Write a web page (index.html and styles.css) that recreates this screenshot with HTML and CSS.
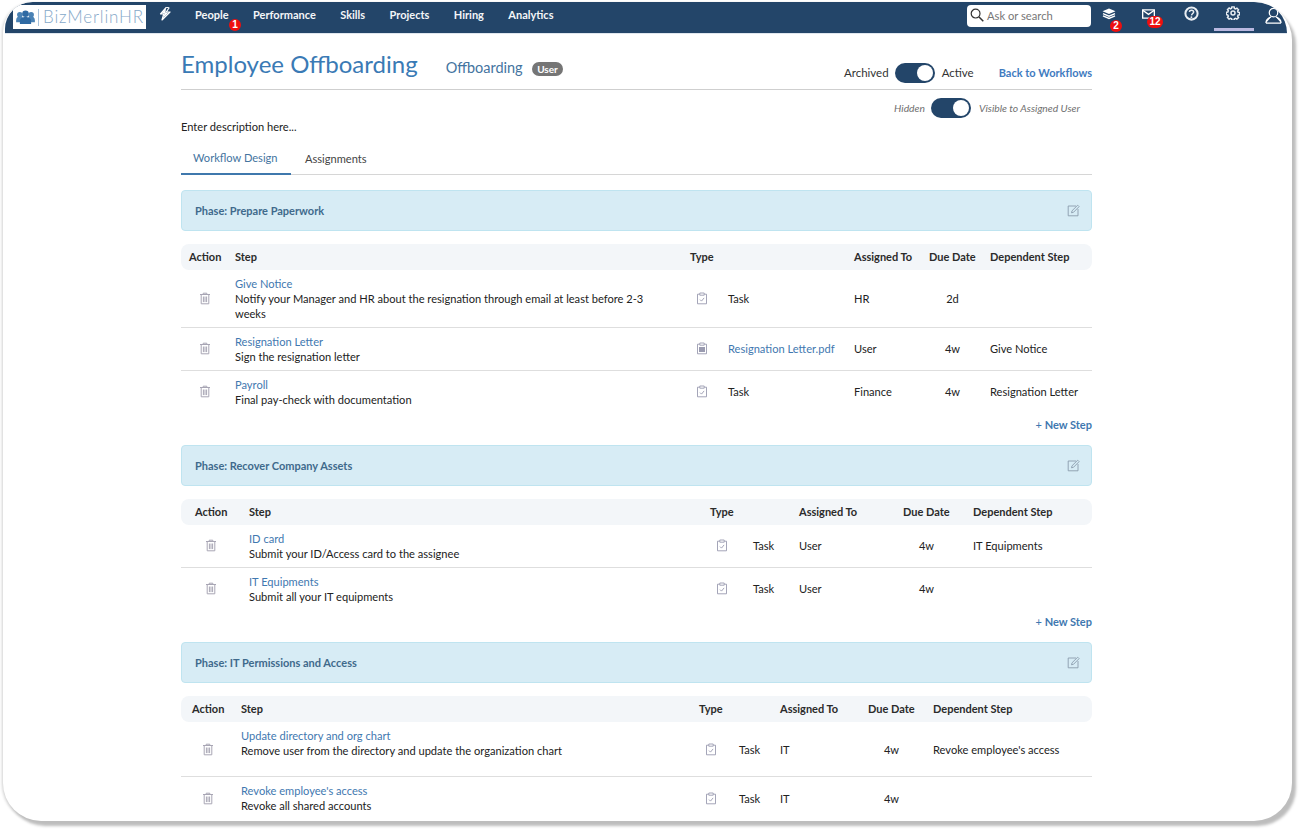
FILE: index.html
```html
<!DOCTYPE html>
<html lang="en">
<head>
<meta charset="utf-8">
<title>Employee Offboarding</title>
<link rel="stylesheet" href="styles.css">
</head>
<body>
<svg class="sprite" aria-hidden="true">
  <symbol id="i-trash" viewBox="0 0 12 13"><path d="M1 2.5h10M4.2 2.5V1.2h3.6v1.3M2.2 2.5v9.3h7.6V2.5M4.4 4.5v5.6M6 4.5v5.6M7.6 4.5v5.6" fill="none" stroke="currentColor" stroke-width="1"/></symbol>
  <symbol id="i-task" viewBox="0 0 12 13"><path d="M3.6 2.2H1.500v9.600h9V2.200H8.400M3.800 1h4.400v2.200H3.800zM4 7.600l1.500 1.500 2.600-3.200" fill="none" stroke="currentColor" stroke-width=".9"/></symbol>
  <symbol id="i-doc" viewBox="0 0 12 13"><path d="M3.600 2.200H1.500v9.600h9V2.200H8.400M3.800 1h4.400v2.200H3.800z" fill="none" stroke="currentColor" stroke-width=".9"/><path d="M3 5h6v5H3z" fill="currentColor"/></symbol>
  <symbol id="i-edit" viewBox="0 0 13 13"><path d="M9 2H1.200v9.800H11V5M5 6.800l-.5 2 2-.5 5.600-5.700-1.400-1.400z" fill="none" stroke="currentColor" stroke-width=".9"/></symbol>
</svg>

<div class="window">
  <nav class="topbar">
    <a class="logo">
      <svg class="logo-mark" viewBox="0 0 20 16"><circle cx="4" cy="5" r="3" fill="#4a82b5"/><circle cx="16" cy="5" r="3" fill="#4a82b5"/><circle cx="10" cy="4" r="3.500" fill="#2f6aa3"/><path d="M0 13V11c0-3 2-4 4-4s4 1 4 4v2zM12 13v-2c0-3 2-4 4-4s4 1 4 4v2z" fill="#4a82b5"/><path d="M4 15v-3c0-3.500 3-4.500 6-4.500s6 1 6 4.500v3z" fill="#2f6aa3"/></svg>
      <span class="logo-sep"></span>
      <span class="logo-text">BizMerlinHR</span>
    </a>
    <svg class="bolt" viewBox="0 0 12 14"><path d="M7.500 0 1.500 7h3.200L3 13l8-8H7.300L10 1z" fill="none" stroke="#fff" stroke-width="1.200" stroke-linejoin="round"/><path d="M7 1 2.500 6.500h3L4 11l5.500-5.500H6.500z" fill="#fff"/></svg>
    <ul class="menu">
      <li class="menu-item">People<span class="badge badge-people">1</span></li>
      <li class="menu-item">Performance</li>
      <li class="menu-item">Skills</li>
      <li class="menu-item">Projects</li>
      <li class="menu-item">Hiring</li>
      <li class="menu-item">Analytics</li>
    </ul>
    <div class="search">
      <svg class="search-icon" viewBox="0 0 14 14"><circle cx="5.600" cy="5.600" r="4.400" fill="none" stroke="#333" stroke-width="1.200"/><path d="m9 9 4.300 4.300" stroke="#333" stroke-width="1.500"/></svg>
      <span class="search-text">Ask or search</span>
    </div>
    <div class="tools">
      <div class="tool tool-layers">
        <svg viewBox="0 0 16 14"><path d="M8 .5 15 3.500 8 6.500 1 3.500z" fill="#fff"/><path d="M1.500 6 8 8.800 14.500 6M1.500 8.500 8 11.300l6.500-2.800" fill="none" stroke="#fff" stroke-width="1.500"/></svg>
        <span class="badge badge-layers">2</span>
      </div>
      <div class="tool tool-mail">
        <svg viewBox="0 0 16 12"><path d="M1 1h14v10H1z" fill="none" stroke="#fff" stroke-width="1.600"/><path d="m1 1.500 7 5 7-5" fill="none" stroke="#fff" stroke-width="1.600"/></svg>
        <span class="badge badge-mail">12</span>
      </div>
      <div class="tool tool-help">
        <svg viewBox="0 0 14 14"><circle cx="7" cy="7" r="5.700" fill="none" stroke="#e8edf2" stroke-width="1.900"/><path d="M5 5.400C5.300 3.400 9 3.500 9 5.500 9 7 7.200 7 7 8.800" fill="none" stroke="#e8edf2" stroke-width="1.400"/><circle cx="6.900" cy="10.400" r=".9" fill="#e8edf2"/></svg>
      </div>
      <div class="tool tool-gear">
        <svg viewBox="0 0 16 16"><circle cx="8" cy="8" r="2.300" fill="none" stroke="#e8edf2" stroke-width="1.700"/><path d="M6.700 1h2.600l.3 1.800 1.300.6 1.600-1 1.800 1.900-1 1.500.6 1.300 1.800.3v2.600l-1.800.3-.6 1.300 1 1.600-1.900 1.800-1.500-1-1.300.6-.3 1.800H6.700l-.3-1.800-1.300-.6-1.600 1-1.800-1.900 1-1.500-.6-1.300L.3 9.800V7.200l1.800-.3.6-1.300-1-1.600 1.900-1.800 1.500 1 1.300-.6z" fill="none" stroke="#e8edf2" stroke-width="1.700"/></svg>
      </div>
      <div class="tool tool-user">
        <svg viewBox="0 0 18 18"><circle cx="9" cy="6" r="4.500" fill="none" stroke="#fff" stroke-width="1.300"/><path d="M1 17c0-4 3-5.500 5.500-6.500M17 17c0-4-3-5.500-5.500-6.500M1 17h16" fill="#fff" stroke="#fff" stroke-width="1.300"/></svg>
      </div>
    </div>
  </nav>

  <main class="page">
    <header class="head">
      <h1 class="title">Employee Offboarding</h1>
      <span class="subtitle">Offboarding</span>
      <span class="pill">User</span>
      <div class="head-right">
        <span class="switch-label">Archived</span>
        <span class="toggle"><span class="knob"></span></span>
        <span class="switch-label">Active</span>
        <a class="back">Back to Workflows</a>
      </div>
    </header>
    <div class="visibility">
      <em class="vis-label">Hidden</em>
      <span class="toggle"><span class="knob"></span></span>
      <em class="vis-label">Visible to Assigned User</em>
    </div>
    <p class="desc">Enter description here...</p>
    <div class="tabs">
      <a class="tab tab-active">Workflow Design</a>
      <a class="tab">Assignments</a>
    </div>

    <section class="phase">
      <div class="phase-bar"><strong>Phase: Prepare Paperwork</strong><svg class="edit"><use href="#i-edit"/></svg></div>
      <div class="steps t1">
        <div class="row row-head">
          <span class="c-action">Action</span><span>Step</span><span class="c-type-head">Type</span><span>Assigned To</span><span>Due Date</span><span>Dependent Step</span>
        </div>
        <div class="row row-wrap">
          <span class="c-action"><svg class="trash"><use href="#i-trash"/></svg></span>
          <div class="c-step"><a class="link">Give Notice</a><br>Notify your Manager and HR about the resignation through email at least before 2-3 weeks</div>
          <span class="c-icon"><svg class="type-icon"><use href="#i-task"/></svg></span><span>Task</span><span>HR</span><span class="c-due">2d</span><span></span>
        </div>
        <div class="row">
          <span class="c-action"><svg class="trash"><use href="#i-trash"/></svg></span>
          <div class="c-step"><a class="link">Resignation Letter</a><br>Sign the resignation letter</div>
          <span class="c-icon"><svg class="type-icon"><use href="#i-doc"/></svg></span><a class="link file-link">Resignation Letter.pdf</a><span>User</span><span class="c-due">4w</span><span>Give Notice</span>
        </div>
        <div class="row row-last">
          <span class="c-action"><svg class="trash"><use href="#i-trash"/></svg></span>
          <div class="c-step"><a class="link">Payroll</a><br>Final pay-check with documentation</div>
          <span class="c-icon"><svg class="type-icon"><use href="#i-task"/></svg></span><span>Task</span><span>Finance</span><span class="c-due">4w</span><span>Resignation Letter</span>
        </div>
      </div>
      <div class="new-step"><span class="plus">+</span> New Step</div>
    </section>

    <section class="phase">
      <div class="phase-bar"><strong>Phase: Recover Company Assets</strong><svg class="edit"><use href="#i-edit"/></svg></div>
      <div class="steps t2">
        <div class="row row-head">
          <span class="c-action">Action</span><span>Step</span><span class="c-type-head">Type</span><span>Assigned To</span><span>Due Date</span><span>Dependent Step</span>
        </div>
        <div class="row">
          <span class="c-action"><svg class="trash"><use href="#i-trash"/></svg></span>
          <div class="c-step"><a class="link">ID card</a><br>Submit your ID/Access card to the assignee</div>
          <span class="c-icon"><svg class="type-icon"><use href="#i-task"/></svg></span><span>Task</span><span>User</span><span class="c-due">4w</span><span>IT Equipments</span>
        </div>
        <div class="row row-last">
          <span class="c-action"><svg class="trash"><use href="#i-trash"/></svg></span>
          <div class="c-step"><a class="link">IT Equipments</a><br>Submit all your IT equipments</div>
          <span class="c-icon"><svg class="type-icon"><use href="#i-task"/></svg></span><span>Task</span><span>User</span><span class="c-due">4w</span><span></span>
        </div>
      </div>
      <div class="new-step"><span class="plus">+</span> New Step</div>
    </section>

    <section class="phase">
      <div class="phase-bar"><strong>Phase: IT Permissions and Access</strong><svg class="edit"><use href="#i-edit"/></svg></div>
      <div class="steps t3">
        <div class="row row-head">
          <span class="c-action">Action</span><span>Step</span><span class="c-type-head">Type</span><span>Assigned To</span><span>Due Date</span><span>Dependent Step</span>
        </div>
        <div class="row row-tall row-wrap">
          <span class="c-action"><svg class="trash"><use href="#i-trash"/></svg></span>
          <div class="c-step"><a class="link">Update directory and org chart</a><br>Remove user from the directory and update the organization chart</div>
          <span class="c-icon"><svg class="type-icon"><use href="#i-task"/></svg></span><span>Task</span><span>IT</span><span class="c-due">4w</span><span>Revoke employee's access</span>
        </div>
        <div class="row row-last row-wrap">
          <span class="c-action"><svg class="trash"><use href="#i-trash"/></svg></span>
          <div class="c-step"><a class="link">Revoke employee's access</a><br>Revoke all shared accounts</div>
          <span class="c-icon"><svg class="type-icon"><use href="#i-task"/></svg></span><span>Task</span><span>IT</span><span class="c-due">4w</span><span></span>
        </div>
      </div>
    </section>
  </main>
</div>
</body>
</html>
```
FILE: styles.css
```css
* { box-sizing: border-box; }
html, body { margin: 0; height: 833px; overflow: hidden; background: #fff; }
body { font: 11.100px/15px Lato, "Liberation Sans", sans-serif; color: #222; }
.sprite { display: none; }
a { color: inherit; text-decoration: none; }

.window {
  width: 1289px; height: 819px; margin: 2px 0 0 3px;
  background: #fff; overflow: hidden;
  border-radius: 30px 38px 38px 38px;
  box-shadow: 4px 5px 3px #bdbdbd, -1px 1px 3px rgba(0,0,0,.18);
}

/* top bar */
.topbar {
  display: flex; align-items: flex-start; height: 31px;
  margin: 0 5px 0 2px; background: #234569; color: #fff;
  border-radius: 28px 32px 0 0;
  box-shadow: 0 1px 0 #dfe6ee;
}
.logo {
  display: flex; align-items: center; width: 133px; height: 24px;
  margin: 3px 0 0 8px; padding-left: 3px; background: #fff; flex: none;
}
.logo-mark { width: 19px; height: 15px; flex: none; }
.logo-sep { width: 1px; height: 17px; margin: 0 4px 0 3px; background: #a9c3dc; flex: none; }
.logo-text { font-size: 17px; font-weight: 300; letter-spacing: .85px; line-height: 24px; color: #86a9c9; white-space: nowrap; }
.bolt { width: 12px; height: 14px; margin: 5px 0 0 13px; flex: none; }
.menu { display: flex; gap: 24.400px; list-style: none; margin: 0 0 0 24px; padding: 0; }
.menu-item { position: relative; font-size: 11px; font-weight: 700; line-height: 26px; color: #f4f6f8; white-space: nowrap; }
.badge {
  position: absolute; min-width: 12px; height: 12px; padding: 0 2px;
  border-radius: 6px; background: #ee0f0f; color: #fff;
  font: 700 10px/12px "Liberation Sans", sans-serif; text-align: center;
}
.badge-people { left: 34px; top: 17px; }
.search {
  display: flex; align-items: flex-start; gap: 3px; width: 124px; height: 22px;
  margin: 3px 0 0 auto; padding: 3px 0 0 3px; background: #fff; border-radius: 4px;
  color: #777; font-size: 11.200px; white-space: nowrap;
}
.search-text { line-height: 15px; }
.search-icon { width: 14px; height: 14px; flex: none; }
.tools { display: flex; margin-right: 4px; height: 31px; }
.tool { position: relative; height: 28px; flex: none; }
.tool svg { display: block; }
.tool-layers { width: 16px; margin-left: 10px; padding-top: 6px; }
.tool-layers svg { width: 16px; height: 13px; }
.badge-layers { left: 9px; top: 18px; }
.tool-mail { width: 16px; margin-left: 24px; padding-top: 7px; }
.tool-mail svg { width: 15px; height: 10px; }
.badge-mail { left: 6px; top: 14px; min-width: 16px; }
.tool-help { width: 16px; margin-left: 27px; padding-top: 4px; }
.tool-help svg { width: 15px; height: 15px; }
.tool-gear { width: 40px; margin-left: 14px; height: 29px; padding: 4px 0 0 12px; border-bottom: 3px solid #b9b8e0; }
.tool-gear svg { width: 14px; height: 14px; }
.tool-user { width: 18px; margin-left: 11px; padding-top: 5px; }
.tool-user svg { width: 17px; height: 17px; }

/* page */
.page { width: 911px; margin-left: 178px; }
.head {
  display: flex; align-items: baseline; height: 57px; padding-top: 15px;
  border-bottom: 1px solid #cfcfcf;
}
.title { margin: 0; font-size: 24px; font-weight: 400; line-height: 31px; color: #3a7ab5; white-space: nowrap; }
.subtitle { margin-left: 28px; font-size: 14.500px; color: #44749f; }
.pill {
  margin-left: 9px; padding: 0 5.500px; border-radius: 7px; background: #757575;
  color: #fff; font-size: 10px; font-weight: 700; line-height: 14px;
}
.head-right { display: flex; align-items: center; margin-left: auto; align-self: flex-start; height: 20px; margin-top: 15px; }
.switch-label { padding-bottom: 2px; font-size: 11.500px; color: #333; }
.toggle {
  display: block; position: relative; width: 40px; height: 20px; margin: 0 7px 0 6px;
  border-radius: 10px; background: #234569;
}
.knob {
  position: absolute; right: 2px; top: 2px; width: 16px; height: 16px;
  border-radius: 50%; background: #fff;
}
.back { margin-left: 25px; padding-bottom: 2px; font-size: 11px; font-weight: 700; color: #3f7bbf; white-space: nowrap; }
.visibility { display: flex; align-items: center; justify-content: flex-end; height: 20px; margin-top: 8px; padding-right: 12px; }
.vis-label { font-size: 10.300px; color: #6f6f6f; }
.visibility .toggle { margin-right: 8px; }
.desc { margin: 1px 0 0; line-height: 16px; color: #222; }
.tabs { display: flex; height: 40px; border-bottom: 1px solid #d6d6d6; }
.tab { display: block; padding: 16px 0 0 14px; color: #444; height: 39px; }
.tab-active { width: 110px; height: 40px; padding: 15px 0 0 12px; color: #44749f; border-bottom: 2px solid #3f78ad; }

.phase-bar {
  display: flex; align-items: center; justify-content: space-between;
  height: 41px; padding: 0 11px 0 13px;
  background: #d7ecf5; border: 1px solid #bfe4f0; border-radius: 4px; color: #3f6a8c;
}
.phase-bar strong { font-size: 11px; }
.phase:first-of-type { margin-top: 15px; }
.edit { width: 13px; height: 13px; color: #8a9cad; }
.steps { margin-top: 13px; }
.row {
  display: grid; align-items: center; padding: 6px 0;
  border-bottom: 1px solid #dedede;
}
.row > span, .file-link { padding-bottom: 2px; }
.row-wrap > span { padding-bottom: 0; }
.t1 .row { grid-template-columns: 46px 455px 38px 126px 75px 61px 1fr; padding-left: 8px; }
.t2 .row { grid-template-columns: 54px 461px 43px 46px 104px 70px 1fr; padding-left: 14px; }
.t3 .row { grid-template-columns: 49px 458px 40px 41px 88px 65px 1fr; padding-left: 11px; }
.row-head {
  height: 26px; background: #f3f6f9; border: 0;
  border-radius: 8px; font-size: 11px; font-weight: 700; color: #2b2b2b;
}
.row.row-head { padding-top: 0; padding-bottom: 0; }
.row-last { border-bottom: 0; }
.row-tall { min-height: 55px; }
.c-step { padding-right: 30px; }
.row-tall .c-step { align-self: start; }
.c-type-head { grid-column: span 2; }
.c-action { width: 31px; text-align: center; }
.row-head .c-action { width: 33px; text-align: left; }
.c-icon { width: 24px; text-align: center; }
.c-due { width: 47px; text-align: center; }
.trash { display: block; width: 12px; height: 13px; margin: 0 auto; color: #a8a6b4; }
.type-icon { display: block; width: 12px; height: 13px; margin: 0 auto; color: #9a9bb0; }
.link { color: #3f78b0; }
.new-step {
  height: 20px; margin: 2px 0 10px; text-align: right; line-height: 20px;
  font-size: 11px; font-weight: 700; color: #3f78b0;
}
.plus { font-weight: 400; }
```
